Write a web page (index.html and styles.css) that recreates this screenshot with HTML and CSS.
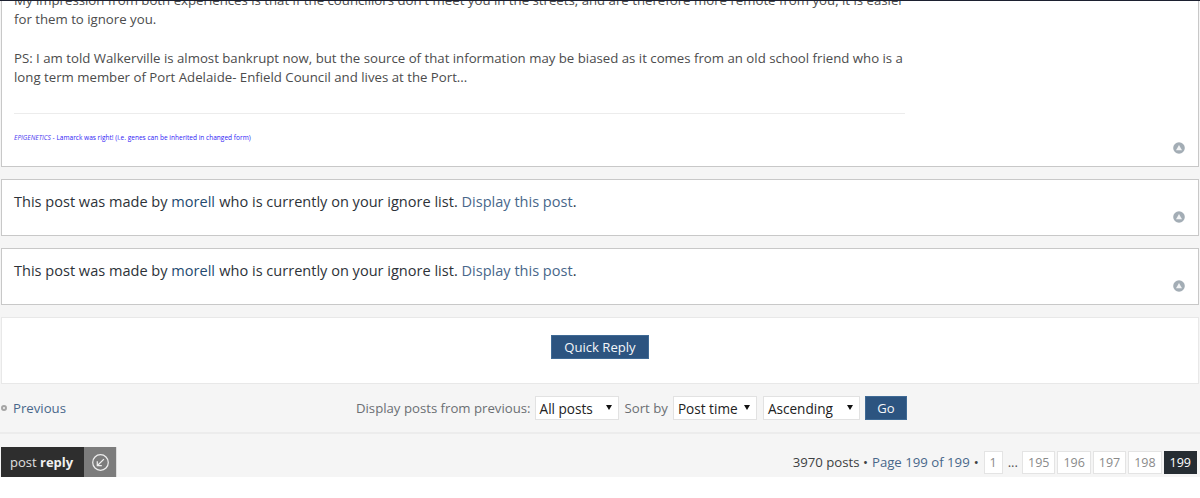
FILE: index.html
```html
<!DOCTYPE html>
<html lang="en">
<head>
<meta charset="utf-8">
<title>Topic</title>
<link rel="stylesheet" href="styles.css">
</head>
<body>
<div class="page">
  <div class="post first">
    <div class="content">
      <p class="clip">My impression from both experiences is that if the councillors don't meet you in the streets, and are therefore more remote from you, it is easier for them to ignore you.</p>
      <p class="ps">PS: I am told Walkerville is almost bankrupt now, but the source of that information may be biased as it comes from an old school friend who is a long term member of Port Adelaide- Enfield Council and lives at the Port...</p>
      <div class="signature"><i>EPIGENETICS</i> - Lamarck was right! (i.e. genes can be inherited in changed form)</div>
    </div>
    <span class="top-icon"><svg viewBox="0 0 12 12" width="12" height="12"><circle cx="6" cy="6" r="5.8" fill="#a3adb5"/><path d="M6 3 9 8.2H3Z" fill="#f2f4f5"/></svg></span>
  </div>
  <div class="post ignored">
    This post was made by <a class="user">morell</a> who is currently on your ignore list. <a class="link">Display this post</a>.
    <span class="top-icon"><svg viewBox="0 0 12 12" width="12" height="12"><circle cx="6" cy="6" r="5.8" fill="#a3adb5"/><path d="M6 3 9 8.2H3Z" fill="#f2f4f5"/></svg></span>
  </div>
  <div class="post ignored">
    This post was made by <a class="user">morell</a> who is currently on your ignore list. <a class="link">Display this post</a>.
    <span class="top-icon"><svg viewBox="0 0 12 12" width="12" height="12"><circle cx="6" cy="6" r="5.8" fill="#a3adb5"/><path d="M6 3 9 8.2H3Z" fill="#f2f4f5"/></svg></span>
  </div>
  <div class="quick-panel"><button class="btn quick">Quick Reply</button></div>
  <div class="sort-row">
    <a class="prev"><span class="bullet"></span>Previous</a>
    <form class="sort">
      <span>Display posts from previous:</span>
      <span class="select w84">All posts<b class="caret"></b></span>
      <span class="gap">Sort by</span>
      <span class="select w84b">Post time<b class="caret"></b></span>
      <span class="select w98">Ascending<b class="caret"></b></span>
      <button class="btn go" type="button">Go</button>
    </form>
  </div>
  <div class="action-row">
    <a class="reply"><span class="reply-label">post <strong>reply</strong></span><span class="reply-icon"><svg viewBox="0 0 20 20" width="19" height="19" fill="none" stroke="#eee" stroke-width="1.3"><circle cx="10" cy="10" r="8.2"/><path d="M13.6 6.4 6.8 13.2M6.6 8.6v4.8h4.8"/></svg></span></a>
    <div class="pagination">
      <span class="total">3970 posts •</span>
      <a class="link">Page 199 of 199</a>
      <span class="total">•</span>
      <a class="pg first-pg">1</a>
      <span class="dots">...</span>
      <a class="pg num">195</a><a class="pg num">196</a><a class="pg num">197</a><a class="pg num">198</a><a class="pg num cur">199</a>
    </div>
  </div>
</div>
</body>
</html>
```
FILE: styles.css
```css
* { box-sizing: border-box; }
html, body { margin: 0; padding: 0; background: #fff; }
body { height: 498px; overflow: hidden; font-family: "Open Sans", "Liberation Sans", sans-serif; }
.page { height: 477px; overflow: hidden; background: #f5f5f5; border-top: 1px solid #1c2030; padding: 0 1px; }
.post { position: relative; background: #fff; border: 1px solid #c8c8c8; }
.first { height: 166px; border-top: 0; margin-bottom: 12px; padding: 0 12px; overflow: hidden; }
.content { width: 891px; color: #4c4c4c; font-size: 13.22px; line-height: 19px; }
.content p { margin: 0; }
.clip { margin-top: -10px !important; }
.ps { margin-top: 20px !important; }
.signature { margin-top: 26px; border-top: 1px solid #ececec; padding-top: 17px; font-size: 6.55px; line-height: 13px; color: #2f22f5; font-weight: 500; }
.signature i { color: #4a38f0; font-weight: 400; }
.ignored { height: 57px; margin-bottom: 12px; padding: 10px 12px 0; font-size: 14.55px; line-height: 22px; color: #2d3238; }
.user { color: #234a70; font-weight: 500; margin-right: 0.5px; }
.link { color: #48678a; }
.top-icon { position: absolute; right: 13px; bottom: 12px; width: 12px; height: 12px; display: block; line-height: 0; }
.quick-panel { height: 67px; background: #fff; border: 1px solid #e8e8e8; display: flex; justify-content: center; padding-top: 17px; }
.btn { background: #2c5480; color: #f4f7fa; border: 1px solid #3f6a95; font-family: inherit; font-weight: 500; font-size: 13.1px; padding: 0; }
.quick { width: 98px; height: 24px; }
.sort-row { height: 50px; border-bottom: 2px solid #ececec; display: flex; align-items: center; font-size: 13.2px; color: #6b6f73; margin: 0 -1px; }
.prev { color: #48678a; display: flex; align-items: center; padding-left: 1px; }
.bullet { width: 6px; height: 6px; border: 2px solid #a5a5a5; border-radius: 50%; margin-right: 6px; display: block; }
.sort { margin: 0 0 0 290px; display: flex; align-items: center; }
.select { position: relative; background: #fff; border: 1px solid #e2e2e2; height: 24px; color: #222; font-size: 13.6px; padding: 1px 0 0 4px; line-height: 22px; display: block; margin-left: 4px; }
.w84 { width: 84px; }
.w84b { width: 84px; margin-left: 5px; }
.w98 { width: 97px; margin-left: 6px; }
.gap { margin-left: 6px; }
.caret { position: absolute; right: 6px; top: 8px; border-left: 3px solid transparent; border-right: 3px solid transparent; border-top: 5px solid #111; }
.go { width: 42px; height: 24px; margin-left: 5px; }
.action-row { display: flex; justify-content: space-between; align-items: flex-start; margin: 13px -1px 0; height: 30px; }
.reply { display: flex; height: 30px; margin-left: 1px; }
.reply-label { width: 83px; background: #2e2e2e; color: #e0e0e0; font-size: 13px; line-height: 30px; padding-left: 9px; }
.reply-label strong { font-weight: 700; color: #f0f0f0; }
.reply-icon { width: 33px; background: #7c7c7c; display: flex; align-items: center; justify-content: center; border-right: 1px solid #ddd; }
.pagination { display: flex; align-items: center; height: 24px; margin-top: 3px; font-size: 13.2px; padding-right: 3px; }
.total { color: #3c3f42; }
.pagination .link { margin: 0 4px; }
.pg { display: block; height: 23px; line-height: 21px; border: 1px solid #e4e4e4; background: #fff; color: #8a8a8a; font-size: 12.5px; text-align: center; padding: 0; margin-left: 2px; }
.num { width: 33.4px; }
.first-pg { width: 19px; margin-left: 5px; }
.dots { color: #555; margin: 0 2px 0 5px; font-size: 13.2px; }
.cur { background: #262d33; color: #fff; border-color: #262d33; }
```
